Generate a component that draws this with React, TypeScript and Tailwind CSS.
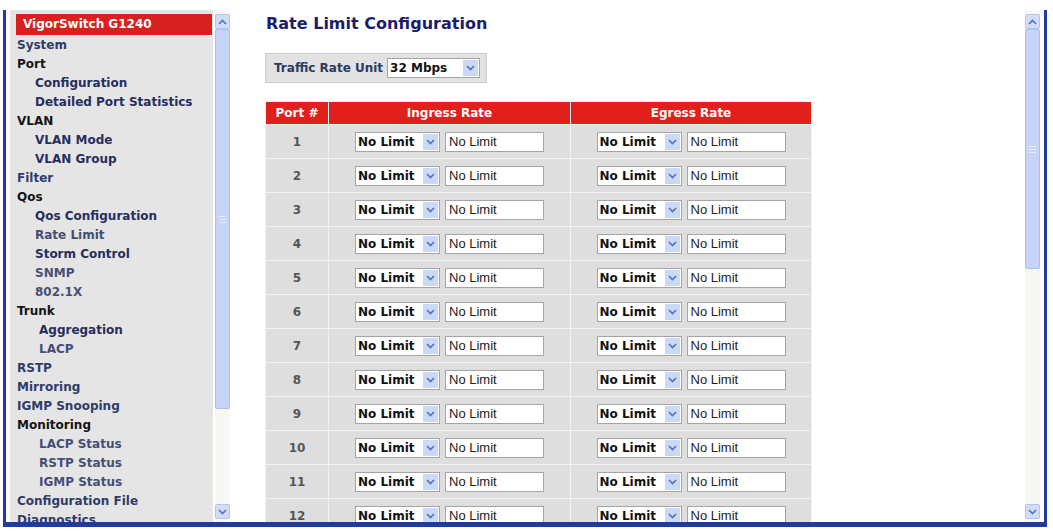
const NAV: { label: string; lvl: 0 | 1 | 2; tone: 'top' | 'head' | 'sub' | 'dim' }[] = [
  { label: 'System', lvl: 0, tone: 'top' },
  { label: 'Port', lvl: 0, tone: 'head' },
  { label: 'Configuration', lvl: 1, tone: 'sub' },
  { label: 'Detailed Port Statistics', lvl: 1, tone: 'sub' },
  { label: 'VLAN', lvl: 0, tone: 'head' },
  { label: 'VLAN Mode', lvl: 1, tone: 'sub' },
  { label: 'VLAN Group', lvl: 1, tone: 'sub' },
  { label: 'Filter', lvl: 0, tone: 'top' },
  { label: 'Qos', lvl: 0, tone: 'head' },
  { label: 'Qos Configuration', lvl: 1, tone: 'sub' },
  { label: 'Rate Limit', lvl: 1, tone: 'dim' },
  { label: 'Storm Control', lvl: 1, tone: 'sub' },
  { label: 'SNMP', lvl: 1, tone: 'dim' },
  { label: '802.1X', lvl: 1, tone: 'dim' },
  { label: 'Trunk', lvl: 0, tone: 'head' },
  { label: 'Aggregation', lvl: 2, tone: 'sub' },
  { label: 'LACP', lvl: 2, tone: 'dim' },
  { label: 'RSTP', lvl: 0, tone: 'top' },
  { label: 'Mirroring', lvl: 0, tone: 'top' },
  { label: 'IGMP Snooping', lvl: 0, tone: 'top' },
  { label: 'Monitoring', lvl: 0, tone: 'head' },
  { label: 'LACP Status', lvl: 2, tone: 'dim' },
  { label: 'RSTP Status', lvl: 2, tone: 'dim' },
  { label: 'IGMP Status', lvl: 2, tone: 'dim' },
  { label: 'Configuration File', lvl: 0, tone: 'top' },
  { label: 'Diagnostics', lvl: 0, tone: 'top' },
];

const PORTS = Array.from({ length: 12 }, (_, i) => i + 1);

const indent = { 0: 'pl-[7px]', 1: 'pl-[25px]', 2: 'pl-[29px]' };
const tone = {
  top: 'text-[#2f3c68]',
  head: 'text-[#141414]',
  sub: 'text-[#252e5e]',
  dim: 'text-[#454e76]',
};

function Chevron({ up = false }: { up?: boolean }) {
  return (
    <svg width="9" height="6" viewBox="0 0 9 6">
      <path
        d={up ? 'M1 5l3.5-3.5L8 5' : 'M1 1l3.5 3.5L8 1'}
        stroke="#5573c4"
        strokeWidth="1.7"
        fill="none"
      />
    </svg>
  );
}

function ScrollBtn({ up = false }: { up?: boolean }) {
  return (
    <div className="flex h-[15px] items-center justify-center rounded-[2px] border border-[#b4c4ec] bg-[#d0dcf8]">
      <Chevron up={up} />
    </div>
  );
}

/** XP style frame scrollbar */
function Scrollbar({ thumb }: { thumb: string }) {
  return (
    <div className="flex h-full w-[15px] flex-col bg-[#f7f7f3] pt-[4px] pb-[3px]">
      <ScrollBtn up />
      <div className={`flex flex-col items-center justify-center gap-[2px] rounded-[2px] border border-[#adc0ec] bg-[#c6d5f7] ${thumb}`}>
        <div className="h-px w-[7px] bg-[#e8eefc]" />
        <div className="h-px w-[7px] bg-[#e8eefc]" />
        <div className="h-px w-[7px] bg-[#e8eefc]" />
      </div>
      <div className="flex-1" />
      <ScrollBtn />
    </div>
  );
}

function Select({ text, className }: { text: string; className: string }) {
  return (
    <div className={`flex h-[20px] items-stretch border border-[#a4a4a4] bg-white ${className}`}>
      <span className="flex-1 truncate pl-[2px] text-[12px] leading-[18px] font-bold text-[#111]">{text}</span>
      <span className="my-px mr-px flex w-[15px] items-center justify-center bg-[#cad9f7]">
        <Chevron />
      </span>
    </div>
  );
}

function RateInput({ className }: { className: string }) {
  return (
    <div className={`flex h-[20px] items-center border border-[#a4a4a4] bg-white pl-[3px] font-['Liberation_Sans',sans-serif] text-[13px] text-[#222] ${className}`}>
      No Limit
    </div>
  );
}

function RateCell() {
  return (
    <td className="border border-[#f3f3f3] bg-[#dedede]">
      <div className="flex items-center justify-center gap-[5px]">
        <Select text="No Limit" className="w-[85px]" />
        <RateInput className="w-[99px]" />
      </div>
    </td>
  );
}

export default function App() {
  return (
    <div className="h-[531px] w-[1053px] overflow-hidden bg-white pt-[10px] pl-[3px] font-['DejaVu_Sans',sans-serif]">
      <div className="flex h-[517px] w-[1044px] border-x-[3px] border-b-[5px] border-[#1d3c9d]">
        {/* Left menu frame */}
        <div className="flex h-full w-[228px] pl-[4px]">
          <div className="h-full w-[203px] overflow-hidden bg-[#e5e5e5] pt-[4px]">
            <div className="ml-[6px] w-[196px] bg-[#d8201e] pl-[7px] text-[12px] leading-[21px] font-bold text-white">
              VigorSwitch G1240
            </div>
            <ul className="mt-[1px]">
              {NAV.map((n) => (
                <li
                  key={n.label}
                  className={`text-[12px] leading-[19px] font-bold whitespace-nowrap ${indent[n.lvl]} ${tone[n.tone]}`}
                >
                  {n.label}
                </li>
              ))}
            </ul>
          </div>
          <div className="ml-[2px]">
            <Scrollbar thumb="h-[380px]" />
          </div>
        </div>

        {/* Main frame */}
        <div className="flex h-full flex-1 overflow-hidden">
          <div className="flex-1 overflow-hidden pt-[4px] pl-[31px]">
            <h1 className="pl-[1px] text-[16px] leading-[20px] font-bold text-[#1c1c6c]">Rate Limit Configuration</h1>

            <div className="mt-[19px] flex h-[30px] w-[222px] items-center gap-[4px] border border-[#cdcdcd] bg-[#e2e2e2] pl-[8px]">
              <span className="text-[12px] font-bold text-[#2b3a62]">Traffic Rate Unit</span>
              <Select text="32 Mbps" className="w-[93px]" />
            </div>

            <table className="mt-[18px] w-[546px] table-fixed border-collapse border border-[#cfcfcf]">
              <colgroup>
                <col className="w-[63px]" />
                <col className="w-[242px]" />
                <col className="w-[241px]" />
              </colgroup>
              <thead>
                <tr className="h-[23px] bg-[#e1201c] text-[12px] font-bold text-white">
                  <th className="border border-[#f2f2f2] font-bold">Port #</th>
                  <th className="border border-[#f2f2f2] font-bold">Ingress Rate</th>
                  <th className="border border-[#f2f2f2] font-bold">Egress Rate</th>
                </tr>
              </thead>
              <tbody>
                {PORTS.map((p) => (
                  <tr key={p} className="h-[34px]">
                    <td className="border border-[#f3f3f3] bg-[#dedede] text-center text-[12px] font-bold text-[#555]">
                      {p}
                    </td>
                    <RateCell />
                    <RateCell />
                  </tr>
                ))}
              </tbody>
            </table>
          </div>
          <div className="flex h-full">
            <Scrollbar thumb="h-[240px]" />
            <div className="w-[4px]" />
          </div>
        </div>
      </div>
    </div>
  );
}
